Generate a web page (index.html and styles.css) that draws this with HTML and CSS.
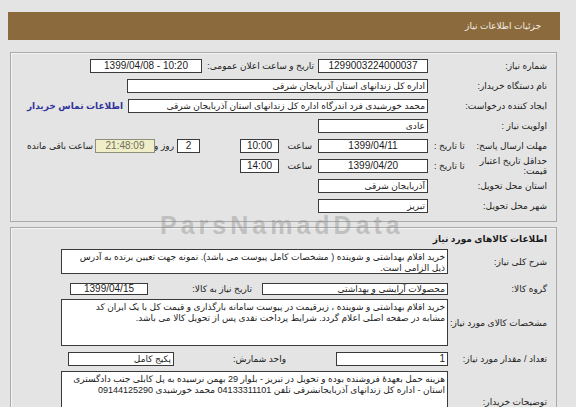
FILE: index.html
```html
<!DOCTYPE html>
<html lang="fa" dir="rtl">
<head>
<meta charset="utf-8">
<title>جزئیات اطلاعات نیاز</title>
<link rel="stylesheet" href="styles.css">
</head>
<body>
<div class="page">
  <div class="titlebar">جزئیات اطلاعات نیاز</div>

  <div class="panel p1">
    <div class="row">
      <div class="lbl">شماره نیاز:</div>
      <div class="box w110 c num">1299003224000037</div>
      <div class="txt t-pub">تاریخ و ساعت اعلان عمومی:</div>
      <div class="box w112 c num ltr">1399/04/08 - 10:20</div>
    </div>
    <div class="row">
      <div class="lbl">نام دستگاه خریدار:</div>
      <div class="box w301">اداره کل زندانهای استان آذربایجان شرقی</div>
    </div>
    <div class="row">
      <div class="lbl">ایجاد کننده درخواست:</div>
      <div class="box w300">محمد خورشیدی فرد اندرگاه اداره کل زندانهای استان آذربایجان شرقی</div>
      <a class="contact" href="#">اطلاعات تماس خریدار</a>
    </div>
    <div class="row">
      <div class="lbl">اولویت نیاز :</div>
      <div class="box w110">عادی</div>
    </div>
    <div class="row">
      <div class="lbl split"><span class="lmain">مهلت ارسال پاسخ:</span><span class="lto">تا تاریخ :</span></div>
      <div class="box w110 c num">1399/04/11</div>
      <div class="txt t-hour">ساعت</div>
      <div class="box time c num">10:00</div>
      <div class="box days c num">2</div>
      <div class="txt t-day">روز و</div>
      <div class="box remain c num">21:48:09</div>
      <div class="txt t-left">ساعت باقی مانده</div>
    </div>
    <div class="row">
      <div class="lbl split"><span class="lmain two">حداقل تاریخ اعتبار قیمت:</span><span class="lto">تا تاریخ :</span></div>
      <div class="box w110 c num">1399/04/20</div>
      <div class="txt t-hour">ساعت</div>
      <div class="box time c num">14:00</div>
    </div>
    <div class="row">
      <div class="lbl">استان محل تحویل:</div>
      <div class="box w110">آذربایجان شرقی</div>
    </div>
    <div class="row">
      <div class="lbl">شهر محل تحویل:</div>
      <div class="box w110">تبریز</div>
    </div>
  </div>

  <div class="panel p2">
    <div class="sect">اطلاعات کالاهای مورد نیاز</div>
    <div class="trow">
      <div class="lbl2">شرح کلی نیاز:</div>
      <div class="area a1">خرید اقلام بهداشتی و شوینده ( مشخصات کامل پیوست می باشد). نمونه جهت تعیین برنده به آدرس<br>ذیل الزامی است.</div>
    </div>
    <div class="frow r-group">
      <div class="lbl2">گروه کالا:</div>
      <div class="box w186">محصولات آرایشی و بهداشتی</div>
      <div class="txt t-need">تاریخ نیاز به کالا:</div>
      <div class="box w78 c num">1399/04/15</div>
    </div>
    <div class="trow">
      <div class="lbl2">مشخصات کالای مورد نیاز:</div>
      <div class="area a2">خرید اقلام بهداشتی و شوینده ، زیرقیمت در پیوست سامانه بارگذاری و قیمت کل با یک ایران کد<br>مشابه در صفحه اصلی اعلام گردد. شرایط پرداخت نقدی پس از تحویل کالا می باشد.</div>
    </div>
    <div class="frow r-qty">
      <div class="lbl2">تعداد / مقدار مورد نیاز:</div>
      <div class="box w112 num">1</div>
      <div class="txt t-unit">واحد شمارش:</div>
      <div class="box w106">پکیج کامل</div>
    </div>
    <div class="trow r-desc">
      <div class="lbl2">توضیحات خریدار:</div>
      <div class="area a3">هزینه حمل بعهدهٔ فروشنده بوده و تحویل در تبریز - بلوار 29 بهمن نرسیده به پل کابلی جنب دادگستری<br>استان - اداره کل زندانهای آذربایجانشرقی تلفن 04133311101 محمد خورشیدی 09144125290</div>
    </div>
  </div>

  <div class="watermark">ParsNamadData</div>
</div>
</body>
</html>
```

FILE: styles.css
```css
html, body {
  margin: 0;
  padding: 0;
}
body {
  background: #e4e4e4;
  font-family: "Liberation Sans", "DejaVu Sans", sans-serif;
  font-size: 9px;
  color: #1c1c1c;
  width: 576px;
  height: 407px;
  overflow: hidden;
}
.page {
  position: relative;
  direction: rtl;
  padding: 12px 16px 0 8px;
}
.titlebar {
  height: 28px;
  line-height: 28px;
  background: #8b6b3e;
  color: #f4ede0;
  padding-right: 19px;
  font-size: 9px;
}
.panel {
  border: 1px solid #a9a9a9;
  box-shadow: inset 1px 1px 0 #f4f4f4;
  margin: 12px 3px 0 2px;
}
.p1 {
  padding: 3px 9px 5px 0;
}
.row {
  display: flex;
  align-items: center;
  height: 20px;
  white-space: nowrap;
}
.lbl {
  width: 119px;
  flex: none;
  text-align: right;
}
.lbl.split {
  display: flex;
  align-items: center;
  justify-content: space-between;
}
.lmain {
  text-align: right;
}
.lmain.two {
  white-space: normal;
  width: 80px;
  line-height: 10px;
}
.lto {
  padding-left: 6px;
}
.box {
  flex: none;
  box-sizing: border-box;
  height: 14px;
  line-height: 12px;
  background: #fff;
  border: 1px solid #3a3a3a;
  padding: 0 2px;
  text-align: right;
  overflow: hidden;
  white-space: nowrap;
}
.box.c {
  text-align: center;
}
.num {
  font-size: 10px;
}
.ltr {
  direction: ltr;
}
.w110 { width: 110px; }
.w112 { width: 112px; }
.w301 { width: 301px; }
.w300 { width: 300px; }
.w186 { width: 186px; }
.w78 { width: 78px; }
.w106 { width: 106px; }
.txt {
  flex: none;
  text-align: right;
  overflow: visible;
}
.t-pub { width: 111px; margin-right: 4px; }
.p1 .row .t-pub + .box { margin-right: 1px; }
.contact {
  margin-right: 5px;
  color: #33339a;
  font-weight: bold;
  text-decoration: none;
}
.t-hour { width: 24px; margin-right: 6px; }
.time { width: 39px; margin-right: 9px; }
.days { width: 23px; margin-right: 40px; }
.t-day { width: 19px; margin-right: 3px; }
.remain {
  width: 60px;
  background: #efeec8;
  border-color: #8f8f7a;
  color: #6f6f5a;
}
.t-left { margin-right: 2px; }

.p2 {
  margin-top: 5px;
  padding: 0 9px 10px 0;
}
.sect {
  height: 21px;
  line-height: 22px;
  font-weight: bold;
  font-size: 9px;
}
.trow {
  display: flex;
  align-items: center;
}
.frow {
  display: flex;
  align-items: center;
  height: 21px;
  white-space: nowrap;
}
.lbl2 {
  width: 99px;
  flex: none;
  text-align: right;
  white-space: nowrap;
}
.area {
  box-sizing: border-box;
  width: 387px;
  background: #fff;
  border: 1px solid #3a3a3a;
  padding: 2px 2px 0 2px;
  line-height: 11px;
  font-size: 9px;
  text-align: right;
  white-space: nowrap;
  overflow: hidden;
}
.a1 { height: 25px; }
.a2 { height: 47px; }
.a3 { height: 50px; }
.r-desc { margin-top: 2px; align-items: flex-end; }
.r-desc .lbl2 { padding-bottom: 14px; }
.r-group { margin-top: 4px; }
.r-group .box { height: 12px; line-height: 10px; }
.t-need { width: 84px; margin-right: 10px; }
.r-group .w78 { margin-right: 20px; }
.r-qty { margin-top: 2px; }
.t-unit { width: 45px; margin-right: 50px; }
.r-qty .w106 { margin-right: 67px; }

.watermark {
  position: absolute;
  left: 160px;
  top: 211px;
  direction: ltr;
  font-family: "Liberation Sans", sans-serif;
  font-weight: bold;
  font-size: 25px;
  letter-spacing: 4px;
  color: rgba(140, 140, 140, 0.42);
  pointer-events: none;
}
```
